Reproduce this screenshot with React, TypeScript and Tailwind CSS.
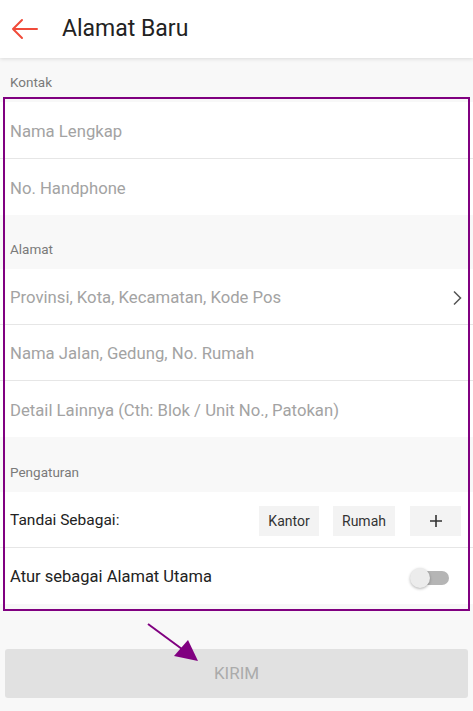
import React from "react";

function Row({ children, h }: { children: React.ReactNode; h: "a" | "b" | "c" }) {
  const cls = h === "a" ? "h-[57px] border-b border-[#e6e6e6]" : h === "b" ? "h-[56px] border-b border-[#e6e6e6]" : "h-[56px]";
  return <div className={`flex items-center bg-white px-[10px] pt-[3px] ${cls}`}>{children}</div>;
}

function SectionLabel({ text, mt }: { text: string; mt: "none" | "a" | "b" }) {
  const m = mt === "none" ? "" : mt === "a" ? "mt-[10px]" : "mt-[11px]";
  return (
    <div className={`flex h-[44px] items-center px-[10px] pt-[4px] text-[13.5px] text-[#7a7a7a] ${m}`}>
      {text}
    </div>
  );
}

function Placeholder({ text }: { text: string }) {
  return <span className="text-[16.7px] text-[#a3a3a3]">{text}</span>;
}

export default function App() {
  return (
    <div className="relative min-h-[711px] w-[473px] bg-[#f8f8f8]" style={{ fontFamily: "Roboto, 'Noto Sans', sans-serif" }}>
      <div className="relative z-10 flex h-[58px] items-center bg-white shadow-[0_1px_4px_rgba(0,0,0,0.12)]">
        <svg className="ml-[11px]" width="28" height="22" viewBox="0 0 28 22" fill="none" stroke="#f04b3a" strokeWidth="2" strokeLinecap="round" strokeLinejoin="round">
          <path d="M26 11H2M11 2L2 11l9 9" />
        </svg>
        <span className="ml-[23px] text-[23px] text-[#222]">Alamat Baru</span>
      </div>

      <SectionLabel text="Kontak" mt="none" />
      <Row h="a"><Placeholder text="Nama Lengkap" /></Row>
      <Row h="c"><Placeholder text="No. Handphone" /></Row>

      <SectionLabel text="Alamat" mt="a" />
      <Row h="b">
        <div className="flex flex-1 items-center justify-between">
          <Placeholder text="Provinsi, Kota, Kecamatan, Kode Pos" />
          <svg width="10" height="16" viewBox="0 0 10 16" fill="none" stroke="#555" strokeWidth="1.5" className="mr-[1px]">
            <path d="M2 1.5l6.5 6.5L2 14.5" />
          </svg>
        </div>
      </Row>
      <Row h="b"><Placeholder text="Nama Jalan, Gedung, No. Rumah" /></Row>
      <Row h="c"><Placeholder text="Detail Lainnya (Cth: Blok / Unit No., Patokan)" /></Row>

      <SectionLabel text="Pengaturan" mt="b" />
      <Row h="b">
        <div className="flex flex-1 items-center">
          <span className="flex-1 text-[15.5px] text-[#222]">Tandai Sebagai:</span>
          <div className="flex h-[30px] w-[60px] items-center justify-center bg-[#f3f3f3] text-[14px] text-[#333]">Kantor</div>
          <div className="ml-[14px] flex h-[30px] w-[62px] items-center justify-center bg-[#f3f3f3] text-[14px] text-[#333]">Rumah</div>
          <div className="ml-[15px] mr-[2px] flex h-[30px] w-[51px] items-center justify-center bg-[#f3f3f3]">
            <svg width="12" height="12" viewBox="0 0 12 12" stroke="#333" strokeWidth="1.6">
              <path d="M6 0v12M0 6h12" />
            </svg>
          </div>
        </div>
      </Row>
      <Row h="c">
        <div className="flex flex-1 items-center">
          <span className="flex-1 text-[16.5px] text-[#222]">Atur sebagai Alamat Utama</span>
          <div className="relative mr-[14px] h-[14px] w-[36px] rounded-full bg-[#b5b5b5]">
            <div className="absolute -left-[3px] -top-[3px] h-[20px] w-[20px] rounded-full bg-[#ececec] shadow-[0_1px_3px_rgba(0,0,0,0.3)]" />
          </div>
        </div>
      </Row>

      <div className="px-[5px] pt-[45px]">
        <div className="flex h-[49px] items-center justify-center rounded-[3px] bg-[#e1e1e1] text-[17px] text-[#ababab]">KIRIM</div>
      </div>

      <div className="pointer-events-none absolute left-[3px] top-[97px] h-[514px] w-[467px] border-2 border-[#800080]" />
      <svg className="pointer-events-none absolute left-0 top-0" width="473" height="711" viewBox="0 0 473 711">
        <line x1="148" y1="624" x2="186" y2="652" stroke="#800080" strokeWidth="2" />
        <polygon points="198,661 174,656 188,640" fill="#800080" />
      </svg>
    </div>
  );
}
